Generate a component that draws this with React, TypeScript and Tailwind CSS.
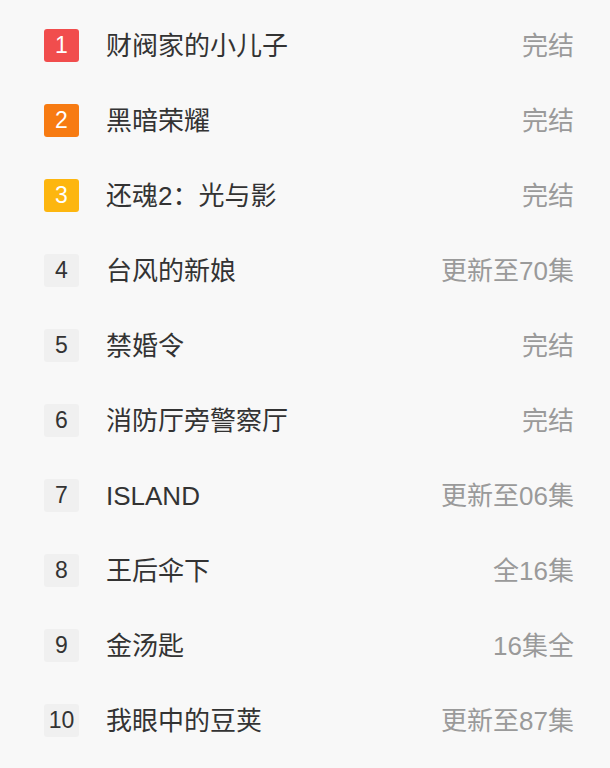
import React from "react";

const rows = [
  { n: 1, title: "财阀家的小儿子", status: "完结" },
  { n: 2, title: "黑暗荣耀", status: "完结" },
  { n: 3, title: "还魂2：光与影", status: "完结" },
  { n: 4, title: "台风的新娘", status: "更新至70集" },
  { n: 5, title: "禁婚令", status: "完结" },
  { n: 6, title: "消防厅旁警察厅", status: "完结" },
  { n: 7, title: "ISLAND", status: "更新至06集" },
  { n: 8, title: "王后伞下", status: "全16集" },
  { n: 9, title: "金汤匙", status: "16集全" },
  { n: 10, title: "我眼中的豆荚", status: "更新至87集" },
];

function badgeClass(n: number) {
  if (n === 1) return "bg-[#f14d4d] text-white";
  if (n === 2) return "bg-[#f77b12] text-white";
  if (n === 3) return "bg-[#fdb60f] text-white";
  return "bg-[#f0f0f0] text-[#333333]";
}

export default function App() {
  return (
    <div
      className="w-[610px] h-[768px] bg-[#f8f8f8] pt-[8px] overflow-hidden"
      style={{ fontFamily: '"Liberation Sans", "Noto Sans CJK SC", sans-serif' }}
    >
      {rows.map((r) => (
        <div key={r.n} className="h-[75px] flex items-center pl-[44px] pr-[36px]">
          <div
            className={`w-[35px] h-[33px] rounded-[3px] flex items-center justify-center text-[23px] leading-none ${badgeClass(r.n)}`}
          >
            {r.n}
          </div>
          <div className="ml-[27px] flex-1 text-[26px] leading-none text-[#333333]">{r.title}</div>
          <div className="text-[26px] leading-none text-[#9a9a9a]">{r.status}</div>
        </div>
      ))}
    </div>
  );
}
